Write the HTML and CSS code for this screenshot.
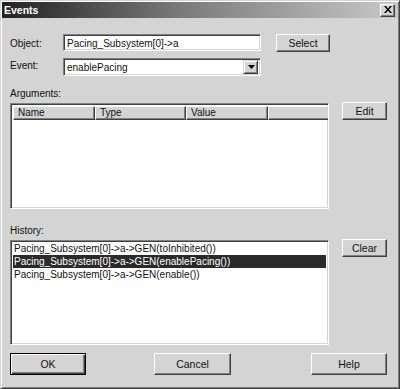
FILE: index.html
```html
<!DOCTYPE html>
<html>
<head>
<meta charset="utf-8">
<link rel="stylesheet" href="styles.css">
</head>
<body>
<div class="window">
  <div class="titlebar">
    <span class="title">Events</span>
    <span class="close">
      <svg width="8" height="7" viewBox="0 0 8 7"><path d="M0 0h2l2 2.5L6 0h2L5 3.5 8 7H6L4 4.5 2 7H0l3-3.5z" fill="#000"/></svg>
    </span>
  </div>
  <div class="content">
    <div class="field-row">
      <span class="lbl">Object:</span>
      <div class="textbox">Pacing_Subsystem[0]-&gt;a</div>
      <div class="btn btn-select">Select</div>
    </div>
    <div class="field-row row-event">
      <span class="lbl lbl-event">Event:</span>
      <div class="combo">
        <span class="combo-text">enablePacing</span>
        <span class="combo-arrow"><svg width="7" height="4" viewBox="0 0 7 4"><path d="M0 0h7L3.5 4z" fill="#000"/></svg></span>
      </div>
    </div>
    <div class="section-label args-label">Arguments:</div>
    <div class="list-row">
      <div class="listview args-list">
        <div class="lv-header">
          <div class="col c-name">Name</div>
          <div class="col c-type">Type</div>
          <div class="col c-value">Value</div>
          <div class="col c-rest"></div>
        </div>
      </div>
      <div class="btn side-btn">Edit</div>
    </div>
    <div class="section-label hist-label">History:</div>
    <div class="list-row hist-row">
      <div class="listview hist-list">
        <div class="item">Pacing_Subsystem[0]-&gt;a-&gt;GEN(toInhibited())</div>
        <div class="item selected">Pacing_Subsystem[0]-&gt;a-&gt;GEN(enablePacing())</div>
        <div class="item">Pacing_Subsystem[0]-&gt;a-&gt;GEN(enable())</div>
      </div>
      <div class="btn side-btn">Clear</div>
    </div>
    <div class="footer">
      <div class="btn btn-default">OK</div>
      <div class="btn btn-cancel">Cancel</div>
      <div class="btn btn-help">Help</div>
    </div>
  </div>
</div>
</body>
</html>
```
FILE: styles.css
```css
* { box-sizing: border-box; }
html, body { margin: 0; padding: 0; background: #d4d4d4; }
body {
  font-family: "Liberation Sans", Arial, sans-serif;
  font-size: 10px;
  color: #111;
}
.window {
  width: 400px;
  height: 389px;
  background: #d4d4d4;
  border-top: 1px solid #d4d4d4;
  border-left: 1px solid #d4d4d4;
  border-right: 1px solid #404040;
  border-bottom: 1px solid #404040;
  box-shadow: inset 1px 1px #ffffff, inset -1px -1px #808080;
  padding: 1px;
}
.titlebar {
  height: 16px;
  background: linear-gradient(to right, #222 0%, #7a7a7a 45%, #c8c8c8 100%);
  display: flex;
  align-items: center;
  justify-content: space-between;
  padding: 0 3px 0 2px;
}
.title {
  color: #fff;
  font-weight: bold;
  font-size: 10.5px;
}
.close {
  width: 15px;
  height: 13px;
  background: #d4d4d4;
  border-top: 1px solid #fff;
  border-left: 1px solid #fff;
  border-right: 1px solid #404040;
  border-bottom: 1px solid #404040;
  box-shadow: inset -1px -1px #808080;
  display: flex;
  align-items: center;
  justify-content: center;
  padding-bottom: 1px;
}
.content {
  padding: 0 0 0 8px;
}
.field-row {
  display: flex;
  align-items: center;
  height: 18px;
  margin-top: 16px;
}
.row-event { margin-top: 6px; }
.lbl {
  width: 53px;
  flex: none;
}
.lbl-event { margin-top: -4px; }
.textbox, .combo, .listview {
  background: #fff;
  border-top: 1px solid #808080;
  border-left: 1px solid #808080;
  border-right: 1px solid #fff;
  border-bottom: 1px solid #fff;
  box-shadow: inset 1px 1px #404040, inset -1px -1px #d4d4d4;
}
.textbox {
  width: 198px;
  height: 17px;
  padding: 2px 0 0 3px;
  align-self: flex-start;
  white-space: nowrap;
  line-height: 13px;
}
.btn {
  background: #d4d4d4;
  border-top: 1px solid #fff;
  border-left: 1px solid #fff;
  border-right: 1px solid #404040;
  border-bottom: 1px solid #404040;
  box-shadow: inset -1px -1px #808080;
  display: flex;
  align-items: center;
  justify-content: center;
  font-size: 10.5px;
  flex: none;
}
.btn-select {
  width: 54px;
  height: 18px;
  margin-left: 15px;
}
.combo {
  width: 198px;
  height: 18px;
  display: flex;
  align-items: center;
  padding: 0 2px 0 3px;
}
.combo-text { flex: 1; padding-top: 1px; }
.combo-arrow {
  width: 15px;
  height: 14px;
  background: #d4d4d4;
  border-top: 1px solid #d4d4d4;
  border-left: 1px solid #d4d4d4;
  border-right: 1px solid #404040;
  border-bottom: 1px solid #404040;
  box-shadow: inset 1px 1px #fff, inset -1px -1px #808080;
  display: flex;
  align-items: center;
  justify-content: center;
  padding-left: 1px;
}
.section-label {
  height: 13px;
  line-height: 13px;
}
.args-label { margin-top: 11px; }
.hist-label { margin-top: 15px; }
.list-row {
  display: flex;
  align-items: flex-start;
  margin-top: 2px;
  gap: 13px;
}
.hist-row { margin-top: 2px; }
.listview {
  width: 319px;
  margin-top: 1px;
  padding: 2px;
  overflow: hidden;
}
.args-list { height: 106px; }
.hist-list { height: 105px; padding-top: 1px; }
.side-btn {
  width: 45px;
  height: 18px;
}
.lv-header {
  display: flex;
  height: 14px;
}
.col {
  background: #d4d4d4;
  border-top: 1px solid #fff;
  border-left: 1px solid #fff;
  border-right: 1px solid #404040;
  border-bottom: 1px solid #404040;
  box-shadow: inset -1px -1px #808080;
  padding-left: 4px;
  line-height: 12px;
  flex: none;
  height: 14px;
}
.c-name { width: 82px; }
.c-type { width: 91px; }
.c-value { width: 82px; }
.c-rest { width: 62px; }
.item {
  height: 13px;
  line-height: 13px;
  padding-left: 1px;
  white-space: nowrap;
}
.item.selected {
  background: #2a2a2a;
  color: #fff;
}
.footer {
  display: flex;
  margin-top: 8px;
}
.footer .btn {
  height: 22px;
}
.btn-default {
  width: 76px;
  border: 1px solid #000;
  box-shadow: inset 1px 1px #fff, inset -1px -1px #404040, inset -2px -2px #808080;
}
.btn-cancel {
  width: 77px;
  margin-left: 68px;
}
.btn-help {
  width: 76px;
  margin-left: 80px;
}
```
